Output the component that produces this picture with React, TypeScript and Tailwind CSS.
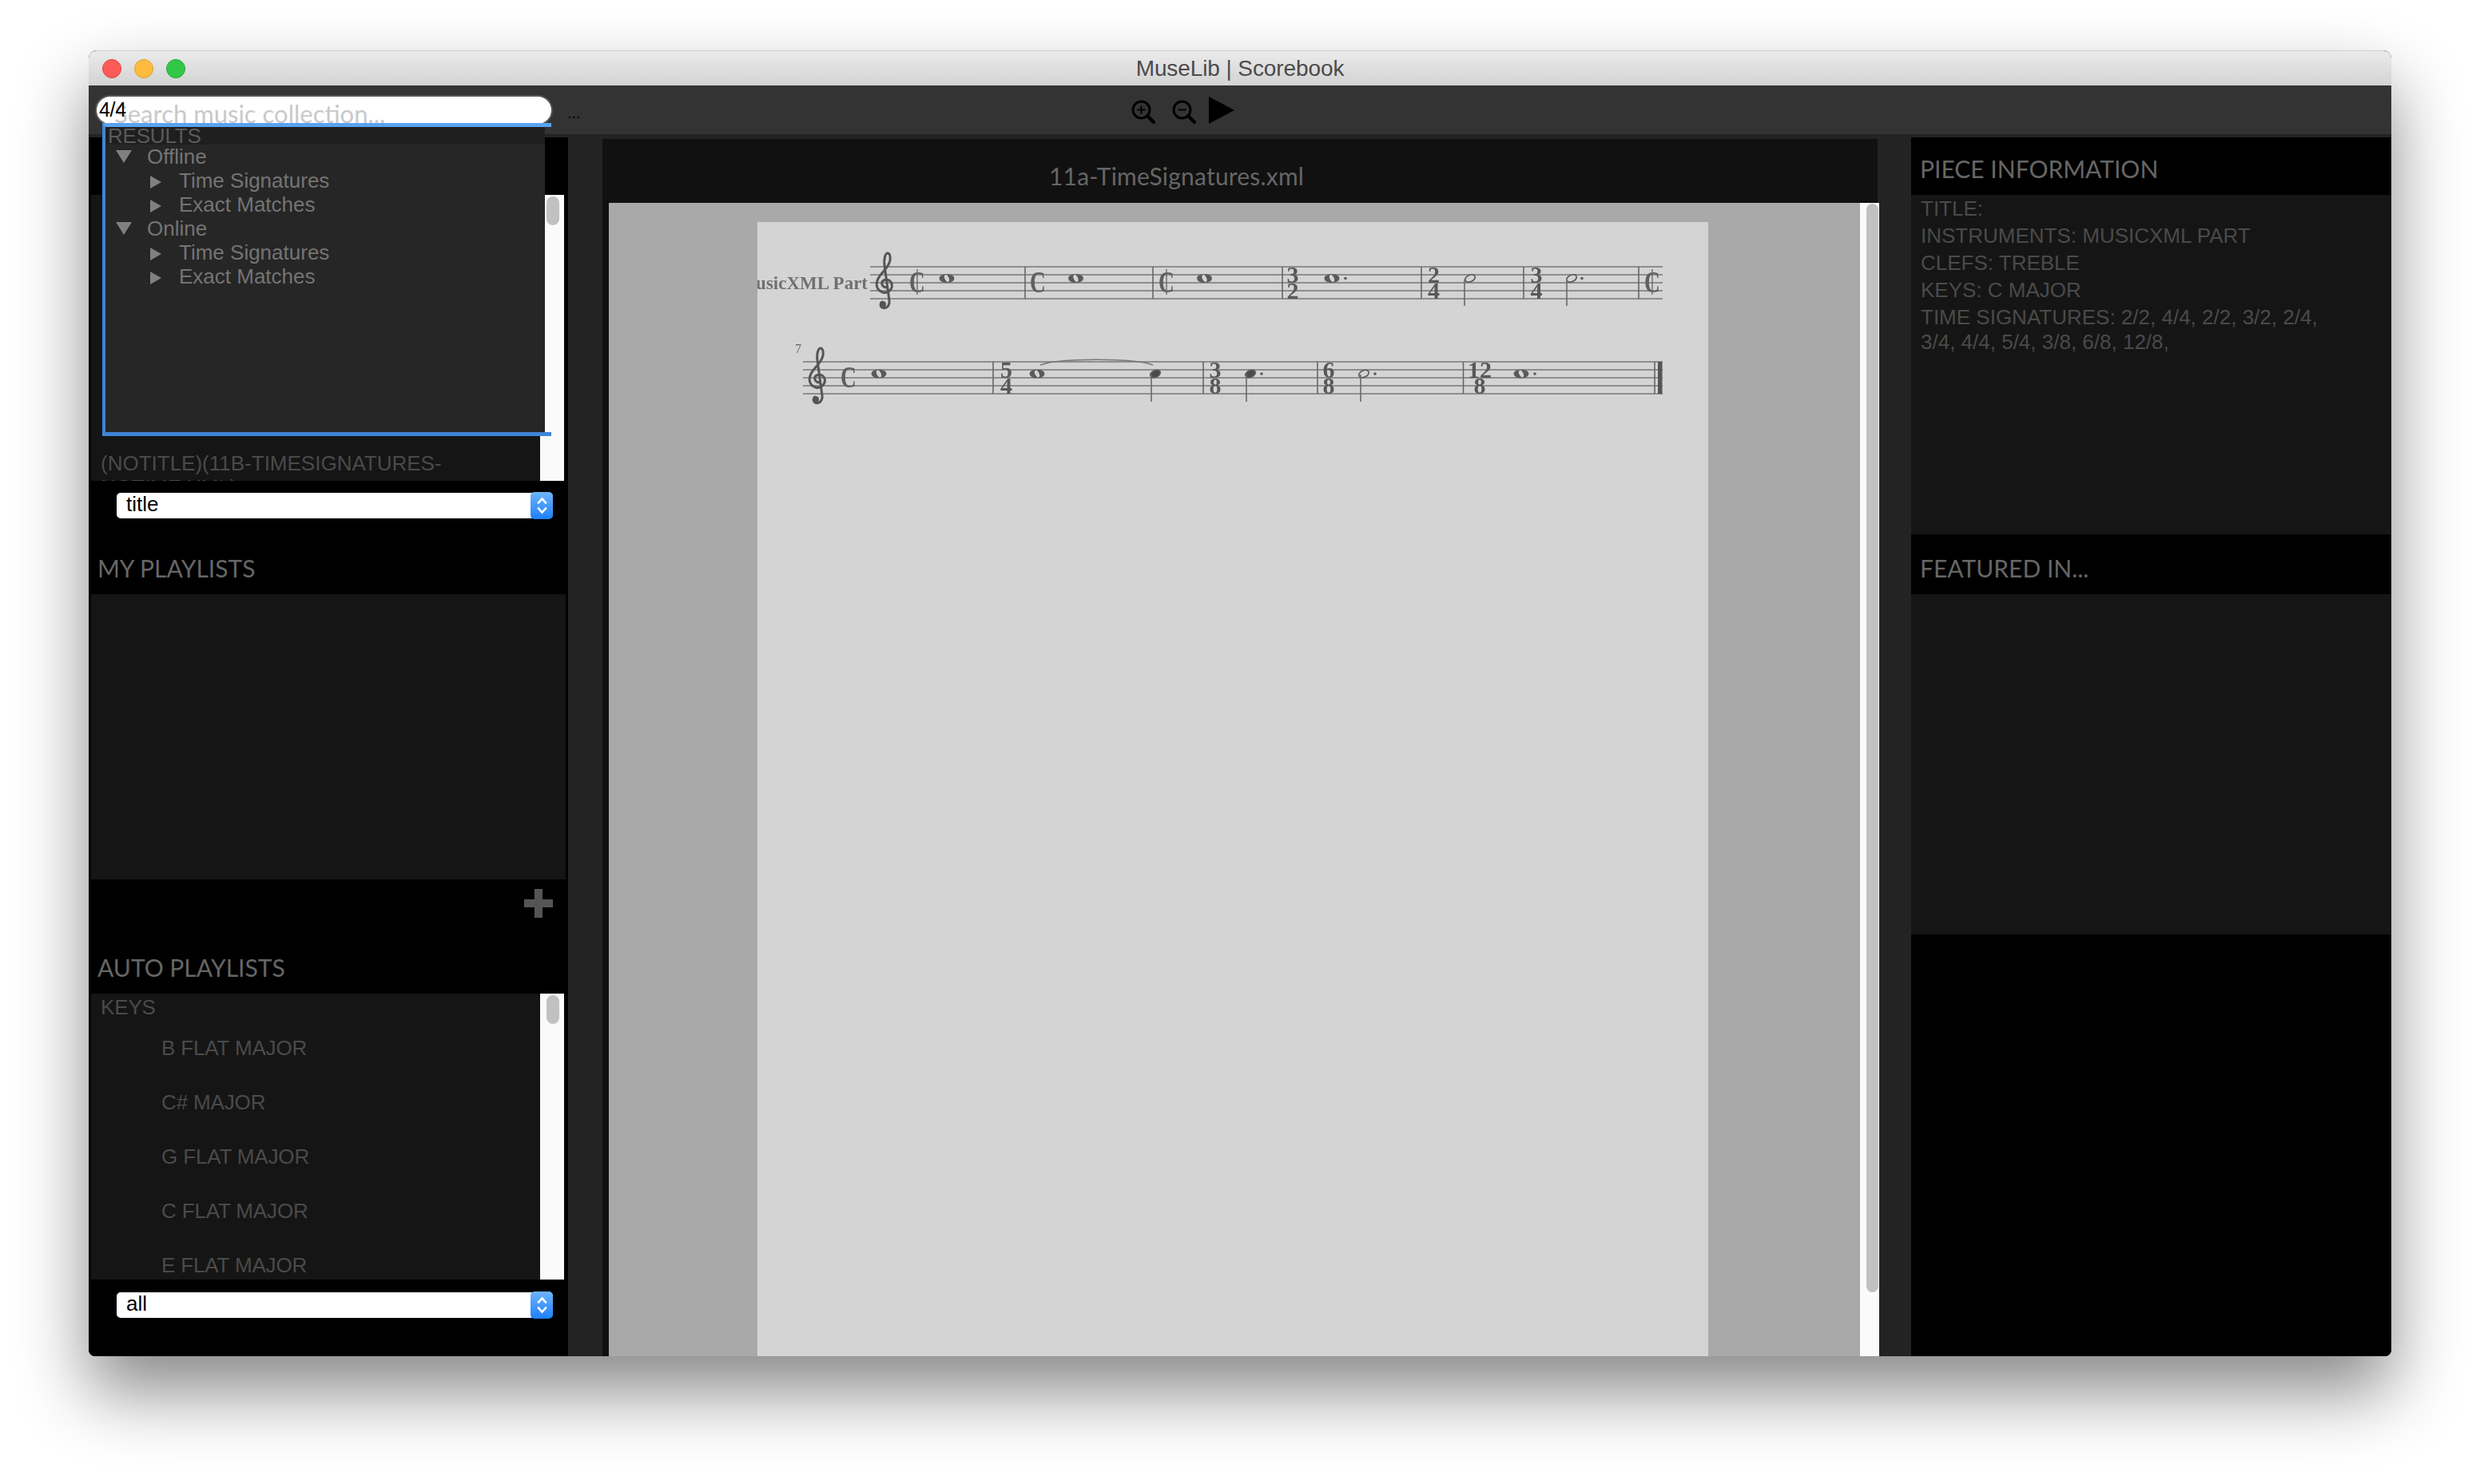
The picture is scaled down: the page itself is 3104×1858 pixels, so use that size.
import { ReactNode } from "react";

const KEYS = ["B FLAT MAJOR", "C# MAJOR", "G FLAT MAJOR", "C FLAT MAJOR", "E FLAT MAJOR"];

function Clef({ x, y }: { x: number; y: number }) {
  return (
    <g transform={`translate(${x} ${y})`}>
      <path
        d="M15 44C10 44 8 40 9 37C11 33 19 33 21 39C23 46 16 52 10 50C3 48 0 41 4 33C8 25 17 20 19 10C20 4 18 1 16 1C13 1 11 8 12 16L18 60C19 68 13 71 9 69C6 67 7 62 10 62"
        fill="none"
        stroke="#555"
        strokeWidth="3"
      />
      <circle cx="10" cy="65" r="4" fill="#555" />
    </g>
  );
}

function Whole({ x, y, dot }: { x: number; y: number; dot?: boolean }) {
  return (
    <g>
      <ellipse cx={x} cy={y} rx="9.5" ry="5.5" fill="#5a5a5a" />
      <ellipse cx={x} cy={y} rx="2.6" ry="4.6" fill="#d4d4d4" transform={`rotate(-25 ${x} ${y})`} />
      {dot && <circle cx={x + 17} cy={y} r="1.8" fill="#5a5a5a" />}
    </g>
  );
}

function Stemmed({ x, y, stemX, bottom, filled, dotX }: { x: number; y: number; stemX: number; bottom: number; filled?: boolean; dotX?: number }) {
  return (
    <g>
      <ellipse
        cx={x}
        cy={y}
        rx="6.6"
        ry="4.2"
        fill={filled ? "#4a4a4a" : "#d4d4d4"}
        stroke="#5a5a5a"
        strokeWidth="1.6"
        transform={`rotate(-24 ${x} ${y})`}
      />
      <line x1={stemX} y1={y + 1} x2={stemX} y2={bottom} stroke="#6a6a6a" strokeWidth="1.6" />
      {dotX && <circle cx={dotX} cy={y} r="1.8" fill="#5a5a5a" />}
    </g>
  );
}

function TimeSig({ x, top, a, b }: { x: number; top: number; a: string; b: string }) {
  return (
    <g fontFamily="'Liberation Serif', serif" fontWeight="700" fontSize="30" fill="#585858" textAnchor="middle">
      <text x={x} y={top + 20}>{a}</text>
      <text x={x} y={top + 40}>{b}</text>
    </g>
  );
}

function Common({ x, y, cut }: { x: number; y: number; cut?: boolean }) {
  return (
    <g>
      <text
        transform={`translate(${x} ${y + 13}) scale(0.72 1)`}
        fontFamily="'Liberation Serif', serif"
        fontSize="38"
        fontWeight="700"
        fill="#5f5f5f"
        textAnchor="middle"
      >
        C
      </text>
      {cut && <line x1={x} y1={y - 16} x2={x} y2={y + 16} stroke="#6a6a6a" strokeWidth="1.4" />}
    </g>
  );
}

function Staff({ x1, x2, top, bars }: { x1: number; x2: number; top: number; bars: number[] }) {
  return (
    <g>
      {[0, 1, 2, 3, 4].map((i) => (
        <line key={i} x1={x1} x2={x2} y1={top + i * 10} y2={top + i * 10} stroke="#777" strokeWidth="1.7" />
      ))}
      {bars.map((b) => (
        <line key={b} x1={b} x2={b} y1={top} y2={top + 40} stroke="#666" strokeWidth="1.6" />
      ))}
    </g>
  );
}

function Score() {
  return (
    <svg viewBox="948 278 1190 260" className="block w-[1190px] h-[260px] blur-[0.7px]">
      <text x="1086" y="362" textAnchor="end" fontFamily="'Liberation Serif', serif" fontSize="23" fontWeight="700" fill="#707070">MusicXML Part</text>
      <Staff x1={1089} x2={2081} top={334} bars={[1283, 1443, 1605, 1779, 1907, 2051]} />
      <Clef x={1095} y={316} />
      <Common x={1148} y={353} cut />
      <Whole x={1185} y={348.5} />
      <Common x={1299} y={353} />
      <Whole x={1346.5} y={348.5} />
      <Common x={1460} y={353} cut />
      <Whole x={1507.5} y={348.5} />
      <TimeSig x={1618} top={334} a="3" b="2" />
      <Whole x={1667} y={348.5} dot />
      <TimeSig x={1794.5} top={334} a="2" b="4" />
      <Stemmed x={1840} y={348.5} stemX={1833} bottom={383} />
      <TimeSig x={1923} top={334} a="3" b="4" />
      <Stemmed x={1967} y={348.5} stemX={1961} bottom={383} dotX={1980} />
      <svg x="2052" y="320" width="29" height="70" viewBox="2052 320 29 70">
        <Common x={2068} y={353} cut />
      </svg>

      <Staff x1={1005} x2={2081} top={453} bars={[1243, 1506, 1649, 1831.5, 2071]} />
      <text x="999" y="442" textAnchor="middle" fontFamily="'Liberation Serif', serif" fontSize="16" fill="#666">7</text>
      <Clef x={1011} y={435} />
      <Common x={1062} y={472} />
      <Whole x={1100} y={468} />
      <TimeSig x={1259.5} top={453} a="5" b="4" />
      <Whole x={1298} y={468} />
      <path d="M1302 457C1325 448 1420 448 1443 457" fill="none" stroke="#777" strokeWidth="1.5" />
      <Stemmed x={1446} y={468} stemX={1441} bottom={503} filled />
      <TimeSig x={1521} top={453} a="3" b="8" />
      <Stemmed x={1565} y={468} stemX={1560} bottom={503} filled dotX={1579} />
      <TimeSig x={1663} top={453} a="6" b="8" />
      <Stemmed x={1707} y={468} stemX={1703} bottom={503} dotX={1721} />
      <TimeSig x={1852} top={453} a="12" b="8" />
      <Whole x={1904} y={468} dot />
      <rect x="2075" y="453" width="5.5" height="40" fill="#555" />
    </svg>
  );
}

function SectionHeader({ children }: { children: ReactNode }) {
  return (
    <div className="h-[72px] shrink-0 pt-[6px] pl-[11px] flex items-center font-['Lato',sans-serif] text-[30px] text-[#666]">
      {children}
    </div>
  );
}

function FakeSelect({ label }: { label: string }) {
  return (
    <div className="relative ml-[35px] w-[546px] h-[32px] bg-white rounded-[5px] pl-[12px] text-[26px] leading-[29px] text-black">
      {label}
      <div className="absolute right-0 top-[-1px] w-[28px] h-[34px] rounded-[5px] bg-gradient-to-b from-[#6cb3fa] to-[#1a7ffb] flex items-center justify-center">
        <svg viewBox="0 0 16 24" className="w-[17px] h-[26px]" fill="none" stroke="#fff" strokeWidth="2.4">
          <path d="M3 9.5 8 4l5 5.5M3 14.5 8 20l5-5.5" />
        </svg>
      </div>
    </div>
  );
}

function Scrollbar({ thumbClass }: { thumbClass: string }) {
  return (
    <div className="w-[30px] bg-[#fafafa] pt-[2px] pl-[8px]">
      <div className={thumbClass} />
    </div>
  );
}

function Tri({ down }: { down?: boolean }) {
  return down ? (
    <svg viewBox="0 0 20 16" className="w-[20px] h-[16px] ml-[13px] mr-[19px]">
      <path d="M0 0h20L10 16z" fill="#808080" />
    </svg>
  ) : (
    <svg viewBox="0 0 14 16" className="w-[14px] h-[16px] ml-[56px] mr-[22px] mt-[3px]">
      <path d="M0 0l14 8L0 16z" fill="#808080" />
    </svg>
  );
}

function ResultRow({ label, down }: { label: string; down?: boolean }) {
  return (
    <div className="h-[30px] flex items-center">
      <Tri down={down} />
      {label}
    </div>
  );
}

function ZoomIcon({ plus }: { plus?: boolean }) {
  return (
    <svg viewBox="0 0 30 30" className="w-[30px] h-[30px]" fill="none" stroke="#000">
      <circle cx="12.5" cy="12.5" r="10.5" strokeWidth="3" />
      <path d="M20 20l8 8" strokeWidth="4.4" strokeLinecap="round" />
      <path d={plus ? "M7.5 12.5h10M12.5 7.5v10" : "M7.5 12.5h10"} strokeWidth="2" />
    </svg>
  );
}

export default function App() {
  return (
    <div className="w-[3104px] h-[1858px] bg-white pt-[63px] pl-[111px] overflow-hidden font-['Liberation_Sans',Arial,sans-serif]">
      <div className="relative w-[2882px] h-[1635px] flex flex-col rounded-t-[10px] rounded-b-[8px] bg-[#232323] shadow-[0_44px_88px_rgba(0,0,0,0.47)]">
        {/* title bar */}
        <div className="relative h-[44px] shrink-0 rounded-t-[10px] border-t border-[#cfcfcf] bg-gradient-to-b from-[#ebebeb] to-[#d3d3d3] flex items-center justify-center text-[28px] tracking-[-0.1px] text-[#4b4b4b]">
          <div className="absolute left-[17px] top-[10px] flex gap-[16px]">
            <div className="w-[24px] h-[24px] rounded-full bg-[#fc5b57] border border-[#e0443e]" />
            <div className="w-[24px] h-[24px] rounded-full bg-[#fdbc40] border border-[#dea123]" />
            <div className="w-[24px] h-[24px] rounded-full bg-[#33c748] border border-[#1dad2b]" />
          </div>
          MuseLib | Scorebook
        </div>

        {/* toolbar */}
        <div className="relative h-[61px] shrink-0 bg-[#333] flex items-start">
          <input
            readOnly
            placeholder="Search music collection..."
            className="ml-[8px] mt-[12px] w-[573px] h-[38px] rounded-[19px] border-2 border-[#555] bg-white pl-[22px] pt-[8px] font-['Lato',sans-serif] text-[31px] leading-[30px] outline-none placeholder:text-[#c9c9c9]"
          />
          <div className="ml-[18px] mt-[22px] text-[20px] leading-[24px] text-black">...</div>
          <div className="ml-[689px] mt-[18px]"><ZoomIcon plus /></div>
          <div className="ml-[21px] mt-[18px]"><ZoomIcon /></div>
          <svg viewBox="0 0 32 34" className="ml-[16px] mt-[14px] w-[32px] h-[34px]">
            <path d="M0 0l32 17L0 34z" fill="#000" />
          </svg>
          <div className="absolute left-[13px] top-[15px] text-[25px] leading-[30px] tracking-[-0.3px] text-black">4/4</div>
        </div>

        {/* columns */}
        <div className="flex-1 min-h-0 flex">
          {/* left column */}
          <div className="w-[600px] mt-[4px] bg-black flex flex-col overflow-hidden rounded-bl-[8px]">
            <div className="h-[72px] shrink-0" />
            <div className="h-[358px] shrink-0 ml-[3px] flex">
              <div className="w-[562px] bg-[#151515] overflow-hidden pt-[321px] pl-[12px] pr-[100px] text-[26px] leading-[30px] text-[#4a4a4a]">
                (NOTITLE)(11B-TIMESIGNATURES-NOTIME.XML)
              </div>
              <Scrollbar thumbClass="w-[16px] h-[36px] rounded-full bg-[#c1c1c1]" />
            </div>
            <div className="h-[70px] shrink-0 pt-[15px]">
              <FakeSelect label="title" />
            </div>
            <SectionHeader>MY PLAYLISTS</SectionHeader>
            <div className="h-[357px] shrink-0 ml-[3px] w-[594px] bg-[#151515]" />
            <div className="h-[71px] shrink-0 pt-[12px] pl-[545px]">
              <svg viewBox="0 0 36 36" className="w-[36px] h-[36px]">
                <path d="M13 0h10v13h13v10H23v13H13V23H0V13h13z" fill="#555" />
              </svg>
            </div>
            <SectionHeader>AUTO PLAYLISTS</SectionHeader>
            <div className="h-[358px] shrink-0 ml-[3px] flex">
              <div className="w-[562px] bg-[#151515] overflow-hidden text-[26px] tracking-[-0.15px] text-[#4a4a4a]">
                <div className="h-[34px] pl-[12px] leading-[34px]">KEYS</div>
                <ul>
                  {KEYS.map((k) => (
                    <li key={k} className="h-[68px] pl-[88px] leading-[68px]">{k}</li>
                  ))}
                </ul>
              </div>
              <Scrollbar thumbClass="w-[16px] h-[36px] rounded-full bg-[#c1c1c1]" />
            </div>
            <div className="pt-[16px]">
              <FakeSelect label="all" />
            </div>
          </div>

          <div className="w-[43px]" />

          {/* score column */}
          <div className="w-[1598px] mt-[6px] flex flex-col min-h-0">
            <div className="h-[80px] shrink-0 w-[1596px] bg-[#111] pl-[559px] pt-[12px] flex items-center font-['Lato',sans-serif] text-[30px] tracking-[0.2px] text-[#666]">
              11a-TimeSignatures.xml
            </div>
            <div className="flex-1 min-h-0 flex">
              <div className="w-[8px] bg-[#111]" />
              <div className="flex-1 bg-[#a9a9a9] pt-[24px] pl-[186px] overflow-hidden">
                <div className="w-[1190px] h-full bg-[#d4d4d4] overflow-hidden">
                  <Score />
                </div>
              </div>
              <div className="w-[24px] bg-[#fafafa] pl-[8px] pt-[1px]">
                <div className="w-[15px] h-[1363px] rounded-full bg-[#c1c1c1]" />
              </div>
            </div>
          </div>

          <div className="w-[40px]" />

          {/* right column */}
          <div className="w-[601px] mt-[4px] bg-black rounded-br-[8px] flex flex-col">
            <SectionHeader>PIECE INFORMATION</SectionHeader>
            <div className="h-[425px] shrink-0 bg-[#151515] pl-[12px] pt-[2px] text-[26px] leading-[31px] text-[#4a4a4a]">
              <div className="mb-[3px]">TITLE:</div>
              <div className="mb-[3px]">INSTRUMENTS: MUSICXML PART</div>
              <div className="mb-[3px]">CLEFS: TREBLE</div>
              <div className="mb-[3px]">KEYS: C MAJOR</div>
              <div className="w-[530px]">TIME SIGNATURES: 2/2, 4/4, 2/2, 3/2, 2/4, 3/4, 4/4, 5/4, 3/8, 6/8, 12/8,</div>
            </div>
            <div className="mt-[3px]">
              <SectionHeader>FEATURED IN...</SectionHeader>
            </div>
            <div className="h-[426px] shrink-0 bg-[#151515]" />
          </div>
        </div>

        {/* search suggestions over the left column */}
        <div className="absolute left-[17px] top-[91px] w-[562px] h-[392px] border-t-[5px] border-b-[5px] border-l-[4px] border-t-[#5aa2ef] border-b-[#3f85d6] border-l-[#3f85d6] text-[26px] leading-[30px] text-[#747474]">
          <div className="w-[550px] h-full bg-[#262626]">
            <div className="h-[22px] bg-[#1f1f1f] pl-[3px] leading-[22px] text-[#5a5a5a] tracking-[-0.2px]">RESULTS</div>
            <ResultRow label="Offline" down />
            <ResultRow label="Time Signatures" />
            <ResultRow label="Exact Matches" />
            <ResultRow label="Online" down />
            <ResultRow label="Time Signatures" />
            <ResultRow label="Exact Matches" />
          </div>
        </div>
      </div>
    </div>
  );
}
